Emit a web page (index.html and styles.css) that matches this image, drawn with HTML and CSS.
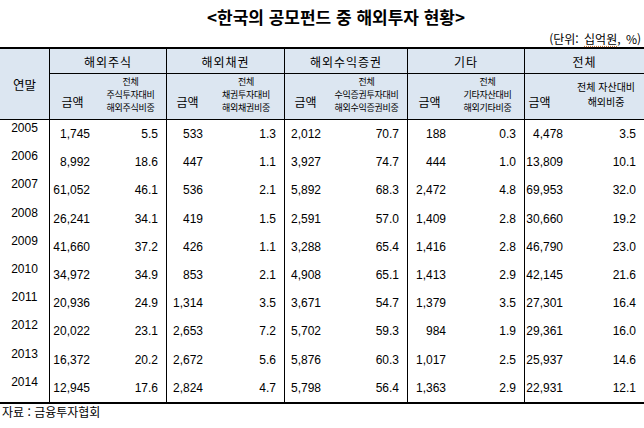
FILE: index.html
```html
<!DOCTYPE html>
<html lang="ko">
<head>
<meta charset="utf-8">
<title>한국의 공모펀드 중 해외투자 현황</title>
<link rel="stylesheet" href="styles.css">
</head>
<body>
<div class="page">
  <h1 class="title">&lt;한국의 공모펀드 중 해외투자 현황&gt;</h1>
  <div class="unit">(단위: <span class="spell">십억원</span>, %)</div>
  <table class="grid">
    <colgroup>
      <col class="c-year">
      <col class="c-a1"><col class="c-p1">
      <col class="c-a2"><col class="c-p2">
      <col class="c-a3"><col class="c-p3">
      <col class="c-a4"><col class="c-p4">
      <col class="c-a5"><col class="c-p5">
    </colgroup>
    <thead>
      <tr class="h1">
        <th rowspan="2" class="year-head">연말</th>
        <th colspan="2" class="group">해외주식</th>
        <th colspan="2" class="group">해외채권</th>
        <th colspan="2" class="group">해외수익증권</th>
        <th colspan="2" class="group">기타</th>
        <th colspan="2" class="group">전체</th>
      </tr>
      <tr class="h2">
        <th class="amt-head sep">금액</th>
        <th class="pct-head">전체<br>주식투자대비<br>해외주식비중</th>
        <th class="amt-head sep">금액</th>
        <th class="pct-head">전체<br>채권투자대비<br>해외채권비중</th>
        <th class="amt-head sep">금액</th>
        <th class="pct-head">전체<br>수익증권투자대비<br>해외수익증권비중</th>
        <th class="amt-head sep">금액</th>
        <th class="pct-head">전체<br>기타자산대비<br>해외기타비중</th>
        <th class="amt-head sep total-amt">금액</th>
        <th class="pct-head total-pct">전체 자산대비<br>해외비중</th>
      </tr>
    </thead>
    <tbody>
      <tr><td class="yr">2005</td><td class="amt sep">1,745</td><td class="pct">5.5</td><td class="amt sep">533</td><td class="pct">1.3</td><td class="amt sep">2,012</td><td class="pct">70.7</td><td class="amt sep">188</td><td class="pct">0.3</td><td class="amt sep">4,478</td><td class="pct">3.5</td></tr>
      <tr><td class="yr">2006</td><td class="amt sep">8,992</td><td class="pct">18.6</td><td class="amt sep">447</td><td class="pct">1.1</td><td class="amt sep">3,927</td><td class="pct">74.7</td><td class="amt sep">444</td><td class="pct">1.0</td><td class="amt sep">13,809</td><td class="pct">10.1</td></tr>
      <tr><td class="yr">2007</td><td class="amt sep">61,052</td><td class="pct">46.1</td><td class="amt sep">536</td><td class="pct">2.1</td><td class="amt sep">5,892</td><td class="pct">68.3</td><td class="amt sep">2,472</td><td class="pct">4.8</td><td class="amt sep">69,953</td><td class="pct">32.0</td></tr>
      <tr><td class="yr">2008</td><td class="amt sep">26,241</td><td class="pct">34.1</td><td class="amt sep">419</td><td class="pct">1.5</td><td class="amt sep">2,591</td><td class="pct">57.0</td><td class="amt sep">1,409</td><td class="pct">2.8</td><td class="amt sep">30,660</td><td class="pct">19.2</td></tr>
      <tr><td class="yr">2009</td><td class="amt sep">41,660</td><td class="pct">37.2</td><td class="amt sep">426</td><td class="pct">1.1</td><td class="amt sep">3,288</td><td class="pct">65.4</td><td class="amt sep">1,416</td><td class="pct">2.8</td><td class="amt sep">46,790</td><td class="pct">23.0</td></tr>
      <tr><td class="yr">2010</td><td class="amt sep">34,972</td><td class="pct">34.9</td><td class="amt sep">853</td><td class="pct">2.1</td><td class="amt sep">4,908</td><td class="pct">65.1</td><td class="amt sep">1,413</td><td class="pct">2.9</td><td class="amt sep">42,145</td><td class="pct">21.6</td></tr>
      <tr><td class="yr">2011</td><td class="amt sep">20,936</td><td class="pct">24.9</td><td class="amt sep">1,314</td><td class="pct">3.5</td><td class="amt sep">3,671</td><td class="pct">54.7</td><td class="amt sep">1,379</td><td class="pct">3.5</td><td class="amt sep">27,301</td><td class="pct">16.4</td></tr>
      <tr><td class="yr">2012</td><td class="amt sep">20,022</td><td class="pct">23.1</td><td class="amt sep">2,653</td><td class="pct">7.2</td><td class="amt sep">5,702</td><td class="pct">59.3</td><td class="amt sep">984</td><td class="pct">1.9</td><td class="amt sep">29,361</td><td class="pct">16.0</td></tr>
      <tr><td class="yr">2013</td><td class="amt sep">16,372</td><td class="pct">20.2</td><td class="amt sep">2,672</td><td class="pct">5.6</td><td class="amt sep">5,876</td><td class="pct">60.3</td><td class="amt sep">1,017</td><td class="pct">2.5</td><td class="amt sep">25,937</td><td class="pct">14.6</td></tr>
      <tr><td class="yr">2014</td><td class="amt sep">12,945</td><td class="pct">17.6</td><td class="amt sep">2,824</td><td class="pct">4.7</td><td class="amt sep">5,798</td><td class="pct">56.4</td><td class="amt sep">1,363</td><td class="pct">2.9</td><td class="amt sep">22,931</td><td class="pct">12.1</td></tr>
    </tbody>
  </table>
  <p class="source">자료 : 금융투자협회</p>
</div>
</body>
</html>
```

FILE: styles.css
```css
html, body {
  margin: 0;
  padding: 0;
  background: #ffffff;
}

.page {
  width: 644px;
  color: #000;
  font-family: "Noto Sans CJK KR", "Liberation Sans", sans-serif;
}

.title {
  margin: 0;
  padding-top: 4px;
  padding-left: 28px;
  height: 26px;
  line-height: 26px;
  font-size: 17px;
  font-weight: bold;
  text-align: center;
}

.unit {
  height: 17px;
  line-height: 17px;
  font-size: 12px;
  word-spacing: 2px;
  text-align: right;
  padding-right: 3px;
}

.spell {
  text-decoration: underline dotted #c87a3a;
  text-underline-offset: 2px;
}

.grid {
  width: 644px;
  table-layout: fixed;
  border-collapse: separate;
  border-spacing: 0;
  border-top: 2px solid #000;
  border-bottom: 2px solid #000;
}

.c-year { width: 49px; }
.c-a1 { width: 46px; }
.c-p1 { width: 71px; }
.c-a2 { width: 42px; }
.c-p2 { width: 76px; }
.c-a3 { width: 42px; }
.c-p3 { width: 81px; }
.c-a4 { width: 44px; }
.c-p4 { width: 73px; }
.c-a5 { width: 44px; }
.c-p5 { width: 76px; }

.grid th {
  background: #dce6f1;
  font-weight: normal;
  padding: 0;
  text-align: center;
  vertical-align: middle;
  white-space: nowrap;
}

.h1 { height: 25px; }
.h2 { height: 46px; }

.year-head {
  font-size: 12.5px;
  border-bottom: 1px solid #000;
  padding-bottom: 4px;
}

.group {
  font-size: 12px;
  letter-spacing: 1px;
  border-left: 1px solid #000;
  border-bottom: 1px solid #000;
}

.h2 th {
  border-bottom: 1px solid #000;
}

.amt-head {
  font-size: 12px;
  padding-top: 10px !important;
}

.total-amt {
  padding-right: 14px !important;
}

.pct-head {
  font-size: 9px;
  line-height: 13px;
  padding-bottom: 4px !important;
  letter-spacing: -0.3px;
}

.total-pct {
  font-size: 10px;
  line-height: 15px;
  padding-bottom: 6px !important;
  letter-spacing: 0;
}

.sep {
  border-left: 1px solid #000;
}

.grid tbody tr {
  height: 28.2px;
}

.grid td {
  font-family: "Liberation Sans", Arial, sans-serif;
  font-size: 12px;
  line-height: 14px;
  padding: 0;
  vertical-align: middle;
  white-space: nowrap;
}

.yr {
  text-align: center;
  padding-bottom: 12px !important;
}

.amt {
  text-align: right;
  padding-right: 5px !important;
}

.pct {
  text-align: right;
  padding-right: 8px !important;
}

.source {
  margin: 0;
  padding-left: 2px;
  height: 16px;
  line-height: 16px;
  font-size: 12px;
}
```
